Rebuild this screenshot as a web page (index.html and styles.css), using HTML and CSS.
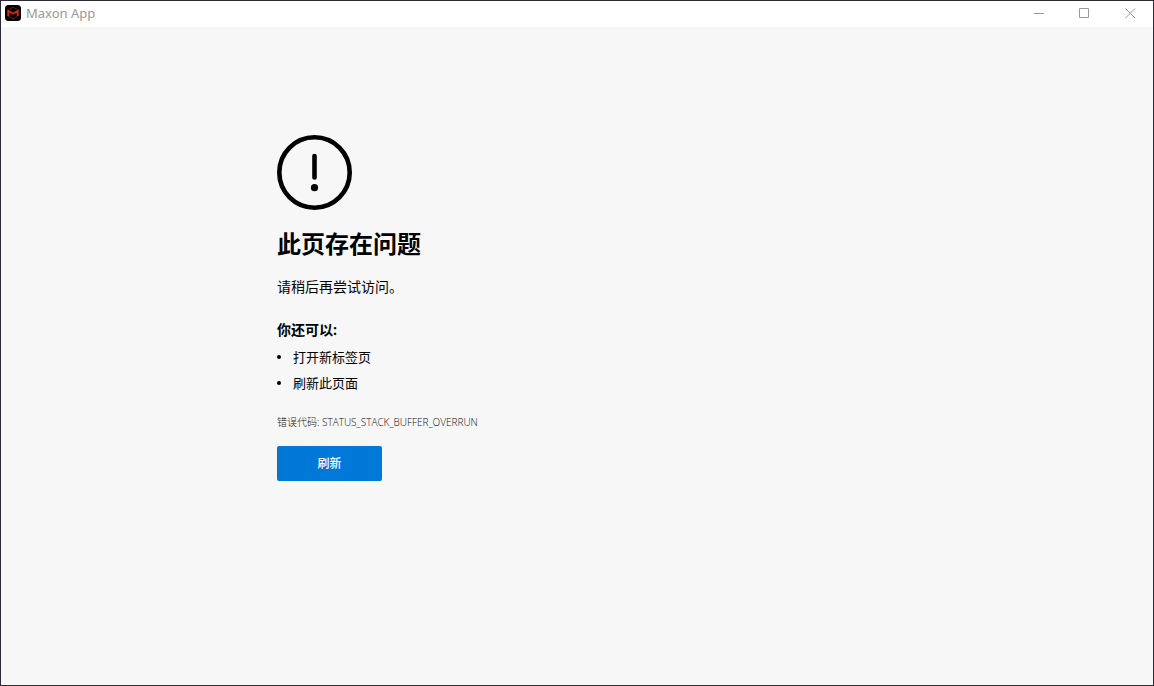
FILE: index.html
```html
<!DOCTYPE html>
<html lang="zh-CN">
<head>
    <meta charset="UTF-8">
    <meta name="viewport" content="width=device-width, initial-scale=1.0">
    <title>Maxon App</title>
    <link rel="stylesheet" href="styles.css">
</head>
<body>
    <div class="window">
        <header class="title-bar">
            <svg class="app-icon" viewBox="0 0 16 16" aria-hidden="true">
                <rect width="16" height="16" rx="3.5" fill="#000"/>
                <path d="M8 2.2 13 5v6l-5 2.8L3 11V5z" fill="none" stroke="#7d180f" stroke-width="0.9"/>
                <path d="M3.2 11V5.8L8 8.8l4.8-3V11" fill="none" stroke="#d8260f" stroke-width="1.7"/>
            </svg>
            <span class="app-name">Maxon App</span>
            <div class="window-buttons">
                <button type="button" aria-label="最小化">
                    <svg viewBox="0 0 11 11"><path d="M1 5.5h10"/></svg>
                </button>
                <button type="button" aria-label="最大化">
                    <svg viewBox="0 0 11 11"><path d="M.5.5h9v9h-9z"/></svg>
                </button>
                <button type="button" aria-label="关闭">
                    <svg viewBox="0 0 11 11"><path d="M.5.5l9.5 9.5M10 .5L.5 10"/></svg>
                </button>
            </div>
        </header>
        <main class="page">
            <div class="error-content">
                <svg class="error-icon" viewBox="0 0 75 75" aria-hidden="true">
                    <circle cx="37.5" cy="37.5" r="35.2" fill="none" stroke="#000" stroke-width="4.6"/>
                    <path d="M37.5 21v21.5" stroke="#000" stroke-width="4.6" stroke-linecap="round"/>
                    <circle cx="37.5" cy="52.7" r="3.6"/>
                </svg>
                <h1>此页存在问题</h1>
                <p class="message">请稍后再尝试访问。</p>
                <h2>你还可以:</h2>
                <ul>
                    <li>打开新标签页</li>
                    <li>刷新此页面</li>
                </ul>
                <p class="error-code">错误代码: STATUS_STACK_BUFFER_OVERRUN</p>
                <button type="button" class="refresh">刷新</button>
            </div>
        </main>
    </div>
</body>
</html>
```

FILE: styles.css
```css
* {
    box-sizing: border-box;
}
body {
    margin: 0;
    font-family: "Open Sans", "Noto Sans CJK SC", sans-serif;
    color: #000;
}
.window {
    display: flex;
    flex-direction: column;
    min-height: 100vh;
    border: 1px solid #2d2b3a;
    background: #f7f7f7;
}
.title-bar {
    display: flex;
    align-items: center;
    height: 26px;
    padding: 0 0 2px 4px;
    background: #fff;
}
.app-icon {
    width: 16px;
    height: 16px;
}
.app-name {
    margin-left: 5px;
    font-family: "Noto Sans", sans-serif;
    font-size: 13px;
    line-height: 16px;
    color: #999;
}
.window-buttons {
    display: flex;
    height: 100%;
    margin-left: auto;
}
.window-buttons button {
    display: flex;
    justify-content: center;
    align-items: center;
    width: 46px;
    padding: 0;
    border: none;
    background: none;
}
.window-buttons svg {
    width: 11px;
    height: 11px;
    fill: none;
    stroke: #999;
}
.page {
    flex: 1;
    padding: 108px 20px 20px;
}
.error-content {
    max-width: 600px;
    margin: 0 auto;
}
.error-icon {
    display: block;
    width: 75px;
    height: 75px;
}
h1 {
    margin: 16px 0;
    font-size: 24px;
    line-height: 35px;
}
.message {
    margin: 0;
    font-size: 14px;
    line-height: 20px;
}
h2 {
    margin: 23px 0 4px;
    font-size: 14px;
    line-height: 20px;
}
ul {
    margin: 0;
    padding: 0;
    list-style: none;
}
li {
    display: flex;
    align-items: center;
    gap: 12px;
    font-size: 13px;
    line-height: 26px;
}
li::before {
    content: "";
    width: 4px;
    height: 4px;
    border-radius: 50%;
    background: #000;
}
.error-code {
    margin: 18px 0 16px;
    font-size: 10px;
    font-weight: 300;
    line-height: 16px;
    color: #111;
}
.refresh {
    display: block;
    min-width: 105px;
    height: 35px;
    padding: 0 8px 2px;
    border: none;
    border-radius: 2px;
    background: #0078d7;
    color: #fff;
    font-family: inherit;
    font-size: 12px;
    font-weight: 500;
}
```
